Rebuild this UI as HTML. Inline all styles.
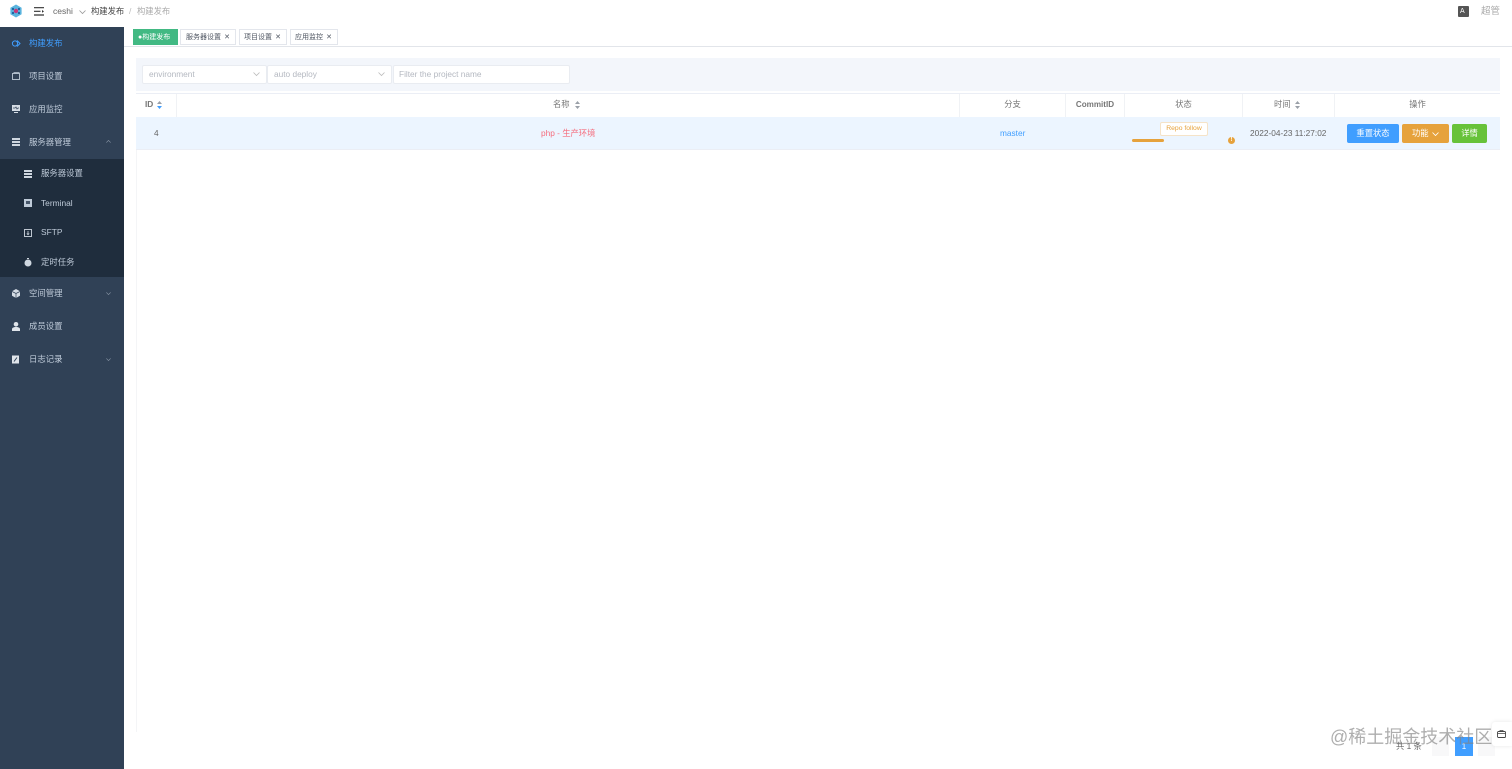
<!DOCTYPE html>
<html><head><meta charset="utf-8">
<style>
html,body{margin:0;padding:0;width:1512px;height:769px;overflow:hidden;background:#fff;font-family:"Liberation Sans","Noto Sans CJK SC",sans-serif;font-size:9px;color:#606266}
#p{position:absolute;left:0;top:0;width:1512px;height:769px;filter:blur(.3px)}
.a{position:absolute;white-space:nowrap}
.side{position:absolute;left:0;top:27px;width:124px;height:742px;background:#304156}
.sub{position:absolute;left:0;top:159px;width:124px;height:118px;background:#1f2d3d}
.m{position:absolute;color:#bfcbd9;font-size:8.4px;line-height:12px;white-space:nowrap;margin-top:-1px}
.tag{position:absolute;top:29px;height:16px;border:1px solid #e3e6ec;box-sizing:border-box;line-height:16px;font-size:7px;color:#4f5662;background:#fff;padding-left:5px;white-space:nowrap}
.tag i{font-style:normal;position:absolute;right:5px;top:0}
.box{position:absolute;top:65px;height:19px;background:#fff;border:1px solid #e9ecf1;border-radius:2px;box-sizing:border-box;font-size:8.3px;color:#b4b8c0;line-height:17px;padding-left:6px;white-space:nowrap}
.th{position:absolute;top:94px;height:23px;line-height:21px;font-size:8.3px;color:#777;text-align:center;border-right:1px solid #f0f2f5;box-sizing:border-box;white-space:nowrap}
.btn{position:absolute;top:124px;height:19px;border-radius:2px;color:#fff;text-align:center;line-height:19px;font-size:8.3px;white-space:nowrap}
svg{position:absolute;overflow:visible}
</style></head><body><div id="p">

<!-- top bar -->
<svg style="left:9px;top:4px" width="14" height="14" viewBox="0 0 14 14"><polygon points="7,0.5 12.6,3.7 12.6,10.3 7,13.5 1.4,10.3 1.4,3.7" fill="#5ab4de"/><circle cx="7" cy="7" r="2.2" fill="#c43a7a"/><circle cx="4" cy="5" r="1.100" fill="#1c5f9e"/><circle cx="10" cy="5" r="1.100" fill="#1c5f9e"/><circle cx="4" cy="9" r="1.100" fill="#1c5f9e"/><circle cx="10" cy="9" r="1.100" fill="#1c5f9e"/></svg>
<svg style="left:34px;top:7px" width="10" height="9" viewBox="0 0 10 9"><path d="M0 .7H10M0 4.300H6.500M0 8H10" stroke="#333" stroke-width="1.200" fill="none"/><path d="M8 3L10 4.400 8 5.800Z" fill="#333"/></svg>
<div class="a" style="left:53px;top:5px;font-size:8.500px;line-height:12px;color:#666">ceshi</div>
<svg style="left:79px;top:10px" width="7" height="4" viewBox="0 0 7 4"><path d="M.5.5L3.500 3.500 6.500.5" stroke="#999" stroke-width=".8" fill="none"/></svg>
<div class="a" style="left:91px;top:5px;font-size:8.300px;line-height:12px;color:#444">构建发布</div>
<div class="a" style="left:129px;top:5px;font-size:8.500px;line-height:12px;color:#bbb">/</div>
<div class="a" style="left:137px;top:5px;font-size:8.300px;line-height:12px;color:#aaa">构建发布</div>
<div class="a" style="left:1458px;top:6px;width:11px;height:11px;background:#555;color:#fff;font-size:7px;line-height:11px;padding-left:2px;box-sizing:border-box;border-radius:1px">A</div>
<div class="a" style="left:1481px;top:5px;font-size:9.500px;line-height:13px;color:#aaa">超管</div>

<!-- sidebar -->
<div class="side"></div>
<div class="sub"></div>
<svg style="left:12px;top:39px" width="8" height="9" viewBox="0 0 8 9"><circle cx="3" cy="4.500" r="2.600" fill="none" stroke="#409eff"/><path d="M5 1.500L8 4.500 5 7.500" fill="none" stroke="#409eff"/></svg>
<div class="m" style="left:29px;top:38px;color:#409eff">构建发布</div>
<svg style="left:12px;top:72px" width="8" height="8" viewBox="0 0 8 8"><rect x=".5" y="1.500" width="7" height="6" fill="none" stroke="#bfcbd9" stroke-width=".9"/><path d="M1.500.5H7.500" stroke="#bfcbd9" stroke-width=".8"/></svg>
<div class="m" style="left:29px;top:71px">项目设置</div>
<svg style="left:12px;top:105px" width="8" height="9" viewBox="0 0 8 9"><rect width="8" height="6" fill="#d5dce5"/><path d="M1 3H3L4 2 5 4 6 3H7" stroke="#304156" stroke-width=".7" fill="none"/><path d="M2 7.500H6" stroke="#d5dce5"/></svg>
<div class="m" style="left:29px;top:104px">应用监控</div>
<svg style="left:12px;top:138px" width="8" height="8" viewBox="0 0 8 8"><path d="M0 0H8V2H0ZM0 3H8V5H0ZM0 6H8V8H0Z" fill="#cfd7e0"/></svg>
<div class="m" style="left:29px;top:137px">服务器管理</div>
<svg style="left:106px;top:140px" width="5" height="3" viewBox="0 0 7 4"><path d="M.5 3.500L3.500.5 6.500 3.500" stroke="#8b98a8" stroke-width=".9" fill="none"/></svg>

<svg style="left:24px;top:170px" width="8" height="8" viewBox="0 0 8 8"><path d="M0 0H8V2H0ZM0 3H8V5H0ZM0 6H8V8H0Z" fill="#cfd7e0"/></svg>
<div class="m" style="left:41px;top:168px">服务器设置</div>
<svg style="left:24px;top:199px" width="8" height="8" viewBox="0 0 8 8"><rect width="8" height="8" fill="#bfcbd9"/><rect x="2" y="2" width="4" height="3" fill="#46566a"/></svg>
<div class="m" style="left:41px;top:198px">Terminal</div>
<svg style="left:24px;top:229px" width="8" height="8" viewBox="0 0 8 8"><rect x=".5" y=".5" width="7" height="7" fill="none" stroke="#cfd7e0" stroke-width=".9"/><path d="M4 2V5.500M2.800 4.500L4 5.700 5.200 4.500" stroke="#cfd7e0" stroke-width=".8" fill="none"/></svg>
<div class="m" style="left:41px;top:227px">SFTP</div>
<svg style="left:24px;top:258px" width="8" height="9" viewBox="0 0 8 9"><circle cx="4" cy="5" r="3.500" fill="#cfd7e0"/><path d="M3 .5H5" stroke="#cfd7e0"/></svg>
<div class="m" style="left:41px;top:257px">定时任务</div>

<svg style="left:12px;top:289px" width="8" height="9" viewBox="0 0 8 9"><polygon points="4,0 8,2.200 8,6.800 4,9 0,6.800 0,2.200" fill="#d5dce5"/><path d="M0 2.500L4 4.500 8 2.500M4 4.500V9" stroke="#304156" stroke-width=".7" fill="none"/></svg>
<div class="m" style="left:29px;top:288px">空间管理</div>
<svg style="left:106px;top:292px" width="5" height="3" viewBox="0 0 7 4"><path d="M.5.5L3.500 3.500 6.500.5" stroke="#8b98a8" stroke-width=".9" fill="none"/></svg>
<svg style="left:12px;top:322px" width="8" height="9" viewBox="0 0 8 9"><circle cx="4" cy="2.300" r="2.300" fill="#dfe4ea"/><path d="M0 9V7.300C0 5.800 1.500 5 4 5S8 5.800 8 7.300V9Z" fill="#dfe4ea"/></svg>
<div class="m" style="left:29px;top:321px">成员设置</div>
<svg style="left:12px;top:355px" width="8" height="9" viewBox="0 0 8 9"><rect y=".5" width="7" height="8" fill="#dfe4ea"/><path d="M2 6.500L5 2.500" stroke="#304156" stroke-width="1"/></svg>
<div class="m" style="left:29px;top:354px">日志记录</div>
<svg style="left:106px;top:358px" width="5" height="3" viewBox="0 0 7 4"><path d="M.5.5L3.500 3.500 6.500.5" stroke="#8b98a8" stroke-width=".9" fill="none"/></svg>

<!-- tags -->
<div class="a" style="left:124px;top:46px;width:1388px;height:1px;background:#e2e5ea"></div>
<div class="tag" style="left:133px;width:45px;background:#42b983;border-color:#42b983;color:#fff;padding-left:4px">●构建发布</div>
<div class="tag" style="left:180px;width:56px">服务器设置<i>✕</i></div>
<div class="tag" style="left:239px;width:48px;padding-left:4px">项目设置<i>✕</i></div>
<div class="tag" style="left:290px;width:48px;padding-left:4px">应用监控<i>✕</i></div>

<!-- filter -->
<div class="a" style="left:136px;top:58px;width:1364px;height:33px;background:#f3f6fb"></div>
<div class="box" style="left:142px;width:125px">environment</div>
<svg style="left:253px;top:72px" width="7" height="4" viewBox="0 0 7 4"><path d="M.5.5L3.500 3.500 6.500.5" stroke="#bbb" stroke-width=".8" fill="none"/></svg>
<div class="box" style="left:267px;width:125px">auto deploy</div>
<svg style="left:378px;top:72px" width="7" height="4" viewBox="0 0 7 4"><path d="M.5.5L3.500 3.500 6.500.5" stroke="#bbb" stroke-width=".8" fill="none"/></svg>
<div class="box" style="left:393px;width:177px;padding-left:5px">Filter the project name</div>

<!-- table -->
<div class="a" style="left:136px;top:93px;width:1364px;height:1px;background:#ebeef5"></div>
<div class="th" style="left:136px;width:41px;text-align:left;padding-left:9px;font-weight:700">ID<svg style="left:21px;top:7px" width="5" height="8" viewBox="0 0 5 8"><path d="M2.500 0L5 3H0Z" fill="#9aa0a8"/><path d="M2.500 8L5 5H0Z" fill="#409eff"/></svg></div>
<div class="a" style="left:177px;top:94px;width:783px;height:23px;border-right:1px solid #f0f2f5;box-sizing:border-box"></div>
<div class="a" style="left:553px;top:94px;line-height:21px;font-size:8.300px;color:#777">名称</div>
<svg style="left:575px;top:101px" width="5" height="8" viewBox="0 0 5 8"><path d="M2.500 0L5 3H0ZM2.500 8L5 5H0Z" fill="#9aa0a8"/></svg>
<div class="th" style="left:960px;width:106px">分支</div>
<div class="th" style="left:1066px;width:59px;font-weight:700;font-size:8.100px">CommitID</div>
<div class="th" style="left:1125px;width:118px">状态</div>
<div class="a" style="left:1243px;top:94px;width:92px;height:23px;border-right:1px solid #f0f2f5;box-sizing:border-box"></div>
<div class="a" style="left:1274px;top:94px;line-height:21px;font-size:8.300px;color:#777">时间</div>
<svg style="left:1295px;top:101px" width="5" height="8" viewBox="0 0 5 8"><path d="M2.500 0L5 3H0ZM2.500 8L5 5H0Z" fill="#9aa0a8"/></svg>
<div class="th" style="left:1335px;width:165px;border-right:0">操作</div>

<div class="a" style="left:136px;top:117px;width:1364px;height:33px;background:#ecf5ff;border-bottom:1px solid #ebeef5;box-sizing:border-box"></div>
<div class="a" style="left:136px;top:150px;width:1px;height:582px;background:#f4f5f7"></div>
<div class="a" style="left:154px;top:127px;font-size:8.300px;line-height:12px;color:#666">4</div>
<div class="a" style="left:541px;top:127px;font-size:8.300px;line-height:12px;color:#f56c7c">php - 生产环境</div>
<div class="a" style="left:1000px;top:127px;font-size:8.300px;line-height:12px;color:#409eff">master</div>
<div class="a" style="left:1160px;top:122px;width:48px;height:14px;box-sizing:border-box;background:#fff;border:1px solid #f5e3c8;border-radius:2px;color:#e6a23c;font-size:6.800px;line-height:12px;text-align:center">Repo follow</div>
<div class="a" style="left:1132px;top:139px;width:32px;height:3px;background:#e6a23c;border-radius:2px"></div>
<div class="a" style="left:1228px;top:137px;width:7px;height:7px;background:#e6a23c;border-radius:50%;color:#fff;font-size:6px;line-height:7px;text-align:center;font-weight:700">!</div>
<div class="a" style="left:1250px;top:127px;font-size:8.300px;line-height:12px;color:#666">2022-04-23 11:27:02</div>
<div class="btn" style="left:1347px;width:52px;background:#409eff">重置状态</div>
<div class="btn" style="left:1402px;width:47px;background:#e6a23c;text-align:left;padding-left:10px;box-sizing:border-box">功能</div>
<svg style="left:1432px;top:132px" width="7" height="4" viewBox="0 0 7 4"><path d="M.5.5L3.500 3.500 6.500.5" stroke="#fff" stroke-width=".8" fill="none"/></svg>
<div class="btn" style="left:1452px;width:35px;background:#67c23a">详情</div>

<!-- footer -->
<div class="a" style="left:1396px;top:740px;font-size:8.300px;line-height:12px;color:#666">共 1 条</div>
<div class="a" style="left:1432px;top:737px;width:17px;height:19px;background:#f8f8f9"></div>
<div class="a" style="left:1455px;top:737px;width:18px;height:19px;background:#409eff;color:#fff;font-size:8px;line-height:19px;text-align:center">1</div>
<div class="a" style="left:1478px;top:737px;width:17px;height:19px;background:#f8f8f9"></div>
<div class="a" style="left:1330px;top:726px;font-size:18px;line-height:22px;color:rgba(130,130,130,.65)">@稀土掘金技术社区</div>
<div class="a" style="left:1492px;top:722px;width:20px;height:24px;background:#fff;box-shadow:0 0 4px rgba(0,0,0,.1);border-radius:3px 0 0 3px"></div>
<svg style="left:1497px;top:730px" width="9" height="8" viewBox="0 0 9 8"><rect x=".5" y="1.500" width="8" height="6" rx="1" fill="none" stroke="#444" stroke-width=".9"/><path d="M3 1.500V.5H6V1.500M.5 3.500H8.500" stroke="#444" stroke-width=".8" fill="none"/></svg>
</div></body></html>
